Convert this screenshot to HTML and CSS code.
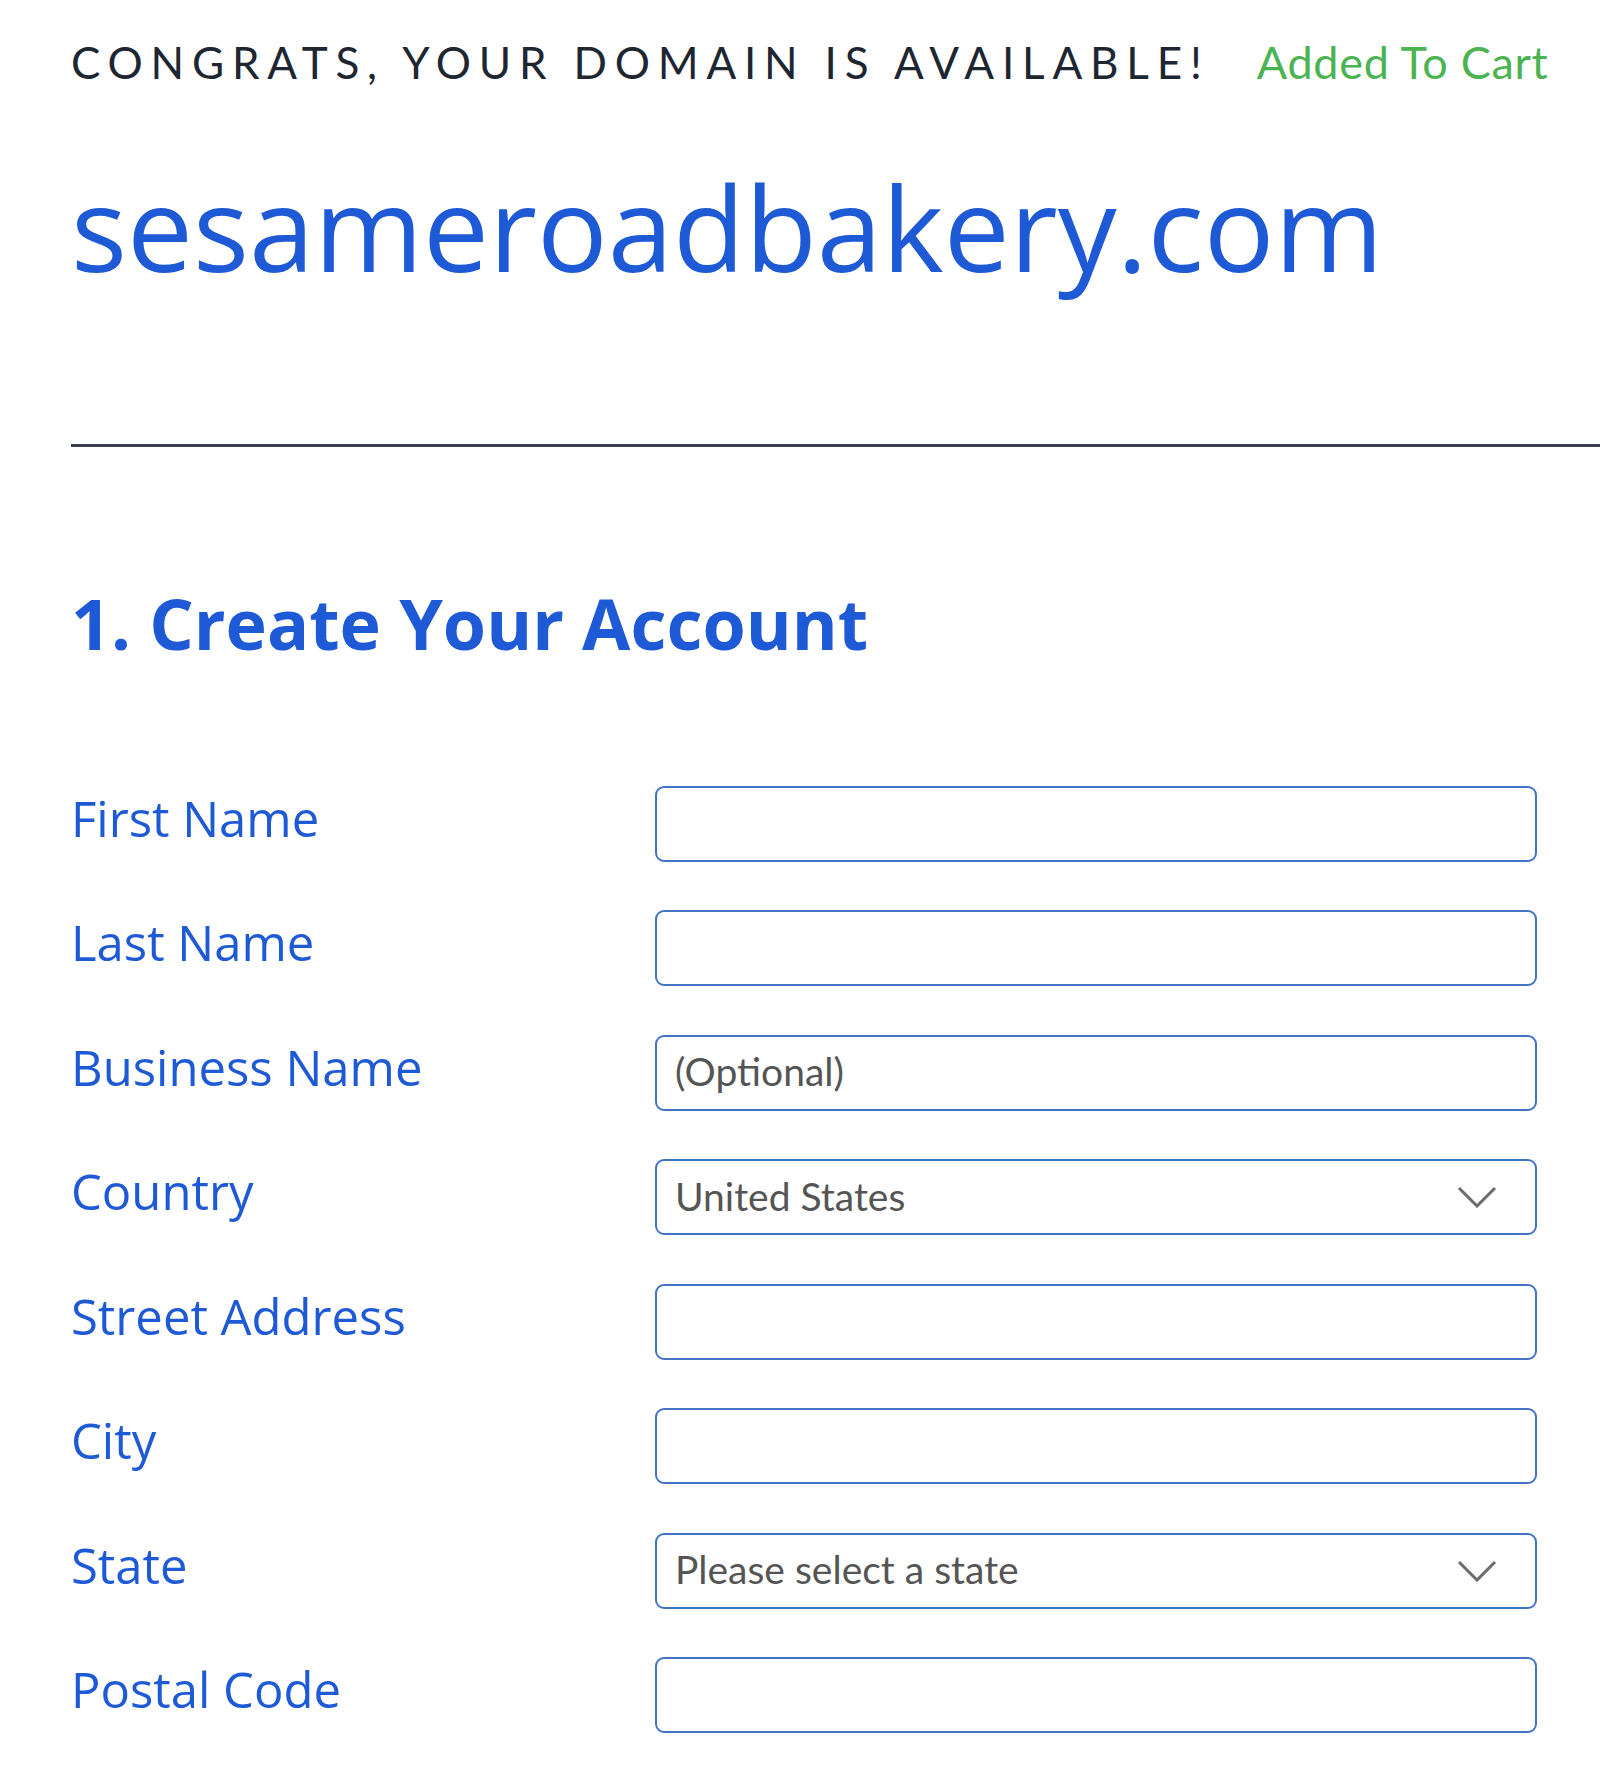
FILE: index.html
```html
<!DOCTYPE html>
<html lang="en">
<head>
<meta charset="utf-8">
<title>Create Your Account</title>
<link rel="stylesheet" href="styles.css">
</head>
<body>
<main class="page">
  <header class="status">
    <span class="status-text">CONGRATS, YOUR DOMAIN IS AVAILABLE!</span>
    <span class="status-cart">Added To Cart</span>
  </header>
  <h1 class="domain">sesameroadbakery.com</h1>
  <hr class="divider">
  <h2 class="section-title">1. Create Your Account</h2>
  <form class="form">
    <label class="label" for="first">First Name</label>
    <input class="field" id="first" type="text">

    <label class="label" for="last">Last Name</label>
    <input class="field" id="last" type="text">

    <label class="label" for="biz">Business Name</label>
    <input class="field" id="biz" type="text" placeholder="(Optional)">

    <label class="label" for="country">Country</label>
    <div class="select-wrap">
      <select class="field select" id="country">
        <option>United States</option>
      </select>
      <svg class="chevron" width="40" height="22" viewBox="0 0 40 22" aria-hidden="true"><polyline points="2,2 20,20 38,2" fill="none" stroke="#6b6b6b" stroke-width="3"/></svg>
    </div>

    <label class="label" for="street">Street Address</label>
    <input class="field" id="street" type="text">

    <label class="label" for="city">City</label>
    <input class="field" id="city" type="text">

    <label class="label" for="state">State</label>
    <div class="select-wrap">
      <select class="field select" id="state">
        <option>Please select a state</option>
      </select>
      <svg class="chevron" width="40" height="22" viewBox="0 0 40 22" aria-hidden="true"><polyline points="2,2 20,20 38,2" fill="none" stroke="#6b6b6b" stroke-width="3"/></svg>
    </div>

    <label class="label" for="zip">Postal Code</label>
    <input class="field" id="zip" type="text">
  </form>
</main>
</body>
</html>
```

FILE: styles.css
```css
* { box-sizing: border-box; }
html, body { margin: 0; padding: 0; background: #ffffff; }
body { font-family: "Open Sans", "Liberation Sans", sans-serif; }

.page {
  padding: 32px 0 0 71px;
}

.status {
  display: flex;
  align-items: baseline;
  gap: 55px;
  height: 60px;
  line-height: 60px;
  font-family: Lato, "Liberation Sans", sans-serif;
  font-size: 44px;
}
.status-text {
  color: #1e2632;
  letter-spacing: 7.8px;
  margin-right: -7.8px;
}
.status-cart {
  color: #4cb352;
  font-size: 45px;
  letter-spacing: 0.7px;
}

.domain {
  margin: 64px 0 0 0;
  font-family: "Open Sans", sans-serif;
  font-weight: 400;
  font-size: 117.5px;
  line-height: 141.6px;
  color: #1e5ad6;
}

.divider {
  margin: 146px 0 0 0;
  border: 0;
  height: 3px;
  background: #3a414d;
}

.section-title {
  margin: 133px 0 0 0;
  font-family: "Open Sans", sans-serif;
  font-weight: 700;
  font-size: 70px;
  line-height: 86px;
  color: #1e5ad6;
}

.form {
  margin-top: 120px;
  display: grid;
  grid-template-columns: 584px 882px;
  grid-auto-rows: 76px;
  row-gap: 48.5px;
}

.label {
  align-self: start;
  font-family: "Open Sans", sans-serif;
  font-size: 49px;
  line-height: 64px;
  color: #1e5ad6;
}

.field {
  display: block;
  width: 100%;
  height: 76px;
  margin: 0;
  padding: 0 18px 3px 18px;
  border: 2.5px solid #4174c4;
  border-radius: 9px;
  background: #ffffff;
  font-family: Lato, "Liberation Sans", sans-serif;
  font-size: 39px;
  color: #555555;
  outline: none;
}
.field::placeholder { color: #555555; opacity: 1; }

.select-wrap {
  position: relative;
}
.select {
  appearance: none;
  -webkit-appearance: none;
}
.chevron {
  position: absolute;
  right: 40px;
  top: 27px;
  pointer-events: none;
}
```
